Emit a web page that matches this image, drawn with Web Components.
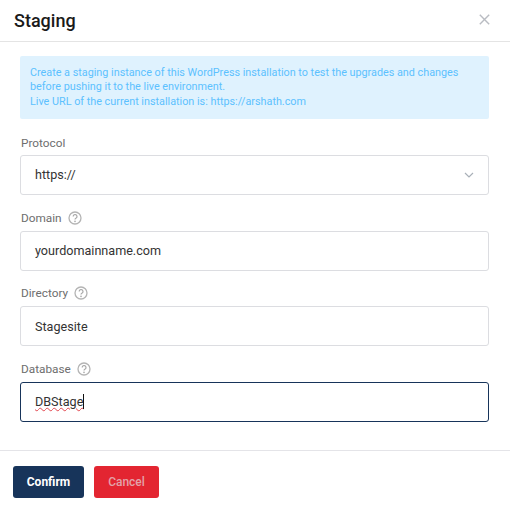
<!DOCTYPE html>
<html>
<head>
<meta charset="utf-8">
<title>Staging</title>
<style>
  html, body { margin: 0; padding: 0; background: #fff; }
  body { font-family: Roboto, "Liberation Sans", sans-serif; }
</style>
</head>
<body>
<staging-modal>
  <span slot="title">Staging</span>
  <info-alert>
    Create a staging instance of this WordPress installation to test the upgrades and changes<br>
    before pushing it to the live environment.<br>
    Live URL of the current installation is: https://arshath.com
  </info-alert>
  <form-field label="Protocol" value="https://" select></form-field>
  <form-field label="Domain" value="yourdomainname.com" help></form-field>
  <form-field label="Directory" value="Stagesite" help></form-field>
  <form-field label="Database" value="DBStage" help focused></form-field>
  <modal-button slot="footer" kind="confirm">Confirm</modal-button>
  <modal-button slot="footer" kind="cancel">Cancel</modal-button>
</staging-modal>
<script>
  customElements.define(
    "staging-modal",
    class extends HTMLElement {
      constructor() {
        super();
        this.attachShadow({ mode: "open" });
        this.shadowRoot.innerHTML = `
<style>
  :host { display: block; width: 510px; height: 515px; color: #212529; }
  .head {
    display: flex;
    justify-content: space-between;
    align-items: center;
    height: 41px;
    padding: 0 20px 0 14px;
    border-bottom: 1px solid #e4e4e4;
  }
  .title { font-size: 18px; font-weight: 500; color: #1a1a1a; }
  .close { display: block; width: 11px; height: 11px; margin-top: -2px; }
  .body { padding: 14px 21px 28px 20px; }
  .foot {
    display: flex;
    gap: 10px;
    padding: 15px 13px;
    border-top: 1px solid #e4e4e8;
  }
</style>
<div class="head">
  <div class="title"><slot name="title"></slot></div>
  <svg class="close" viewBox="0 0 11 11" fill="none" stroke="#b9bcc2" stroke-width="1.4">
    <path d="M.8.8 10.2 10.2M10.2.8 .8 10.2"/>
  </svg>
</div>
<div class="body"><slot></slot></div>
<div class="foot"><slot name="footer"></slot></div>`;
      }
    }
  );

  customElements.define(
    "info-alert",
    class extends HTMLElement {
      constructor() {
        super();
        this.attachShadow({ mode: "open" });
        this.shadowRoot.innerHTML = `
<style>
  :host {
    display: block;
    height: 63px;
    box-sizing: border-box;
    padding: 9.6px 10px 0;
    background: #dff2fe;
    border-radius: 2px;
    color: #5cc1ff;
    font-size: 10.8px;
    line-height: 14.5px;
    white-space: nowrap;
  }
</style>
<slot></slot>`;
      }
    }
  );

  customElements.define(
    "form-field",
    class extends HTMLElement {
      constructor() {
        super();
        this.attachShadow({ mode: "open" });
        const value = this.getAttribute("value");
        const help = this.hasAttribute("help")
          ? `<svg class="help" viewBox="0 0 14 14" fill="none">
               <circle cx="7" cy="7" r="6" stroke="#b4b4b4" stroke-width="1.3"/>
               <path d="M5.2 5.5a1.9 1.9 0 1 1 2.9 1.6c-.7.4-1.1.8-1.1 1.5" stroke="#a8a8a8" stroke-width="1.2"/>
               <circle cx="7" cy="10.4" r=".8" fill="#a8a8a8"/>
             </svg>`
          : "";
        const arrow = this.hasAttribute("select")
          ? `<svg class="arrow" viewBox="0 0 10 6" fill="none" stroke="#a9b0b8" stroke-width="1.2">
               <path d="M1 1 5 5 9 1"/>
             </svg>`
          : "";
        const text = this.hasAttribute("focused")
          ? `<span class="typo">${value}</span><span class="caret"></span>`
          : value;
        this.shadowRoot.innerHTML = `
<style>
  :host { display: block; margin-top: 15.5px; }
  :host([select]) { margin-top: 17px; }
  .label {
    display: flex;
    align-items: center;
    gap: 6px;
    height: 14px;
    margin-bottom: 6px;
    padding-left: 1px;
    color: #6e6e6e;
    font-size: 11.8px;
  }
  :host([select]) .label { margin-bottom: 5px; }
  .help { width: 14px; height: 14px; }
  .box {
    display: flex;
    justify-content: space-between;
    align-items: center;
    box-sizing: border-box;
    height: 40px;
    padding: 0 14px;
    background: #fff;
    border: 1px solid #dcdde1;
    border-radius: 3px;
    color: #333;
    font-size: 12.6px;
  }
  :host([focused]) .box { border-color: #17345a; }
  :host([select]) .value { margin-top: -1px; }
  .arrow { width: 10px; height: 6px; }
  .value { display: flex; align-items: center; }
  .typo { text-decoration: underline wavy #e2474f 1px; text-underline-offset: 1px; }
  .caret { width: 1px; height: 15px; background: #111; }
</style>
<div class="label"><span>${this.getAttribute("label")}</span>${help}</div>
<div class="box"><span class="value">${text}</span>${arrow}</div>`;
      }
    }
  );

  customElements.define(
    "modal-button",
    class extends HTMLElement {
      constructor() {
        super();
        this.attachShadow({ mode: "open" });
        this.shadowRoot.innerHTML = `
<style>
  :host {
    display: flex;
    align-items: center;
    justify-content: center;
    box-sizing: border-box;
    height: 32px;
    border-radius: 3px;
    font-size: 12px;
    font-weight: 700;
  }
  :host([kind="confirm"]) { width: 71px; background: #17345a; color: #fff; }
  :host([kind="cancel"]) { width: 65px; background: #e32531; color: #e3a2a9; font-weight: 500; }
</style>
<slot></slot>`;
      }
    }
  );
</script>
</body>
</html>
